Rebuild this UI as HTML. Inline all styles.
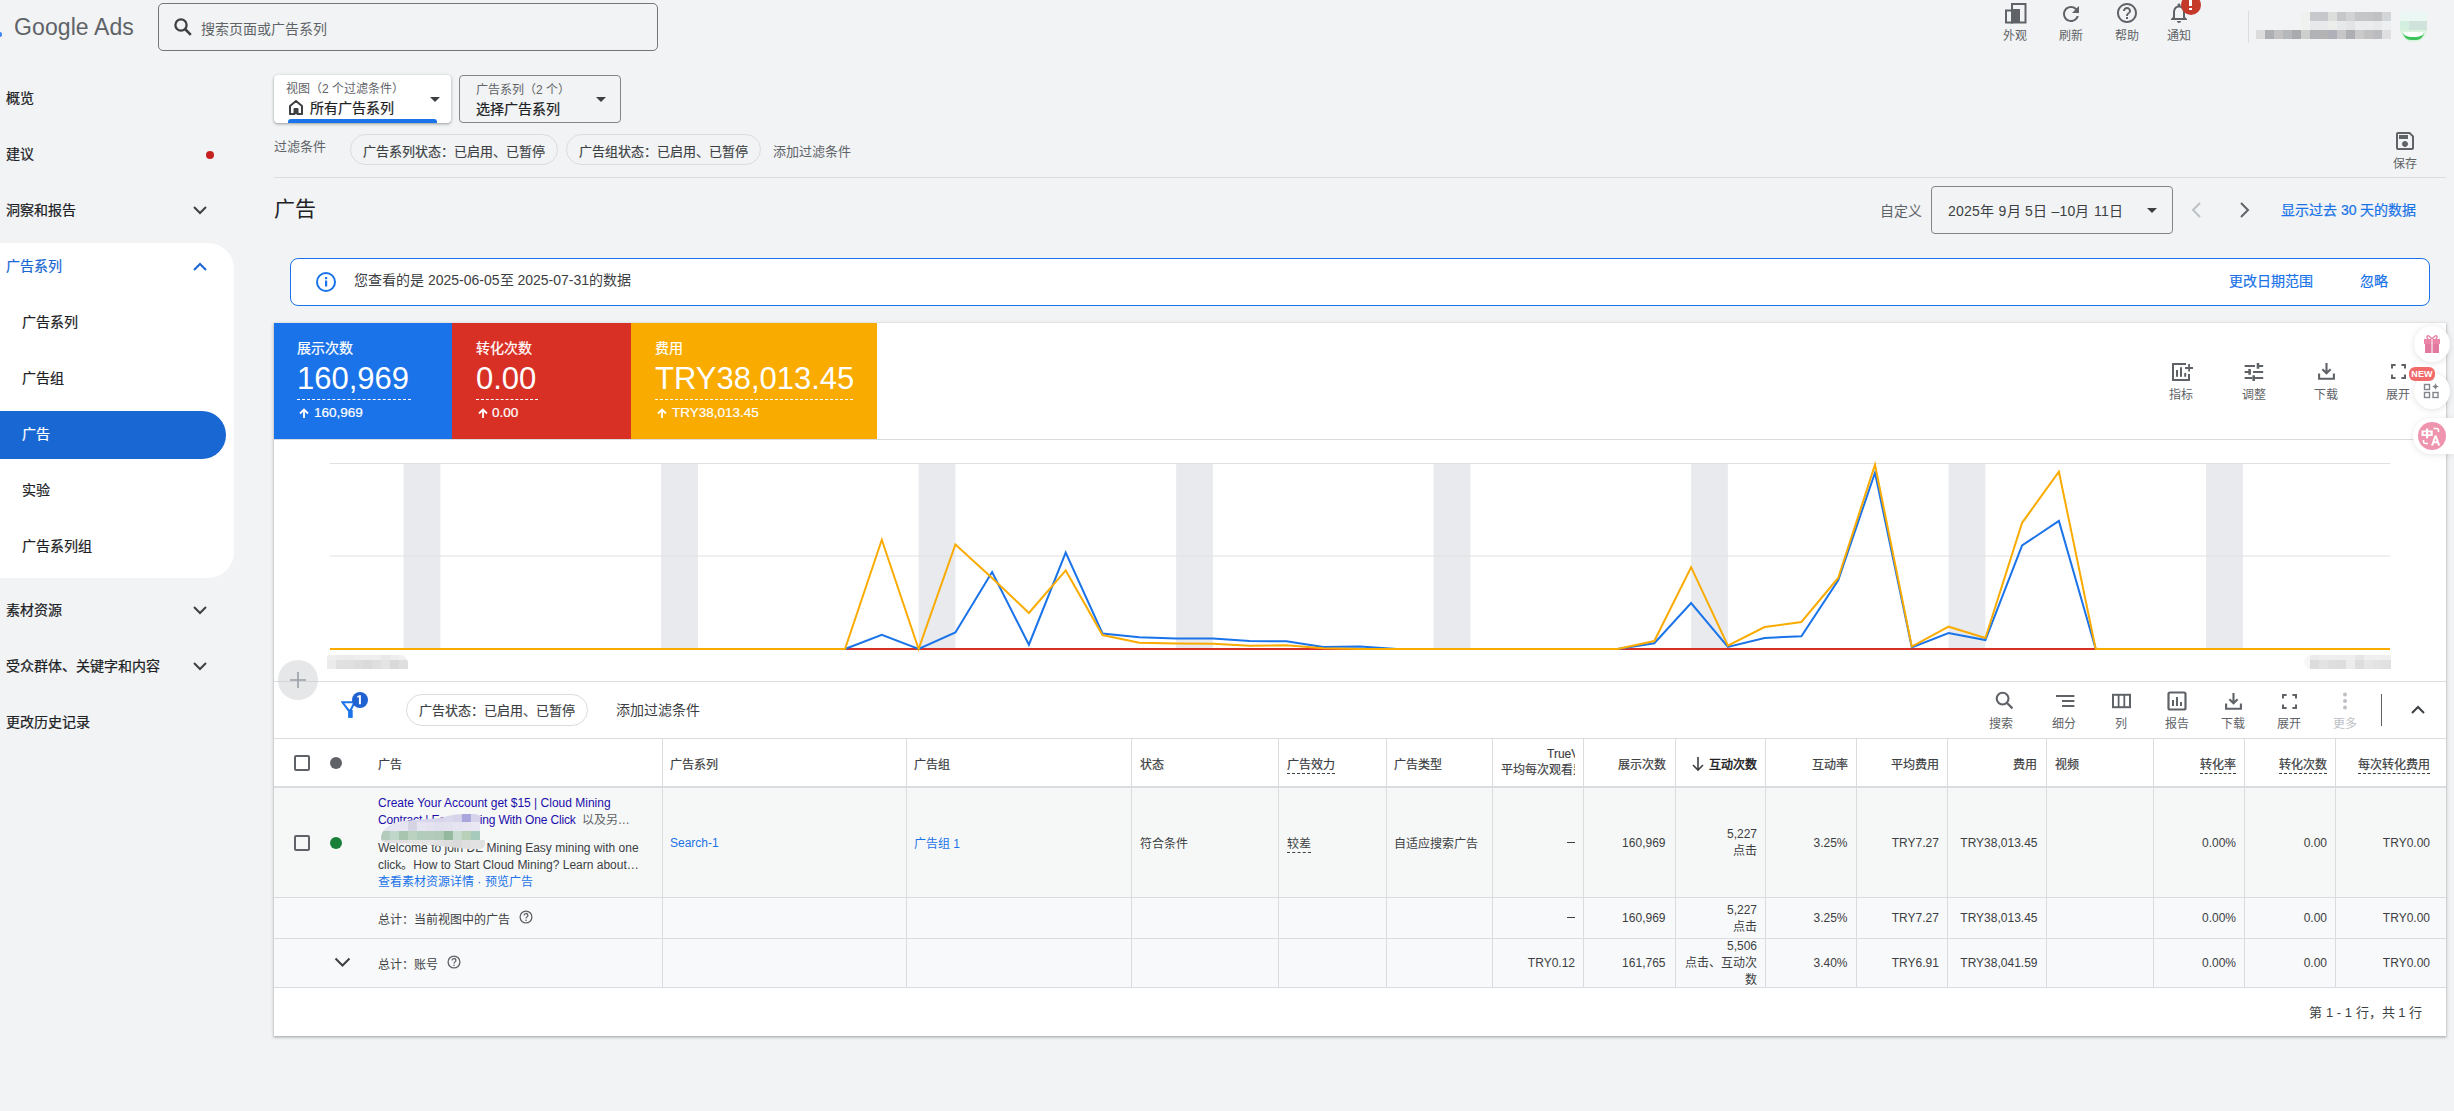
<!DOCTYPE html>
<html lang="zh-CN"><head><meta charset="utf-8">
<style>
*{box-sizing:border-box;margin:0;padding:0}
html,body{width:2454px;height:1111px;overflow:hidden;background:#f1f3f4;font-family:"Liberation Sans",sans-serif;color:#3c4043}
.a{position:absolute;white-space:nowrap;line-height:1.149}
.t12{font-size:12px}.t13{font-size:13px}.t14{font-size:14px}
.med{-webkit-text-stroke-width:0.22px}
.hm{-webkit-text-stroke-width:0.15px}
.c{line-height:16px}
svg{display:block}
</style></head><body>
<!-- HEADER -->
<div class="a" style="left:0;top:0;width:2454px;height:60px">
  <div class="a" style="left:0;top:32px;width:2px;height:5px;background:#4285f4;border-radius:0 2px 2px 0"></div>
  <div class="a" style="left:14px;top:14px;font-size:23px;color:#5f6368;letter-spacing:0.1px">Google Ads</div>
  <div class="a" style="left:158px;top:3px;width:500px;height:48px;border:1px solid #757575;border-radius:5px"></div>
  <svg class="a" style="left:174px;top:18px" width="18" height="18" viewBox="0 0 18 18"><circle cx="7" cy="7" r="5.6" stroke="#3c4043" stroke-width="2.3" fill="none"/><path d="M11 11l5.8 5.8" stroke="#3c4043" stroke-width="2.6"/></svg>
  <div class="a t14" style="left:201px;top:21px;color:#5f6368">搜索页面或广告系列</div>

  <!-- header icons -->
  <svg class="a" style="left:2005px;top:3px" width="22" height="21" viewBox="0 0 22 21"><rect x="7" y="1" width="13.5" height="18.5" stroke="#5f6368" stroke-width="2" fill="none"/><rect x="1" y="7.5" width="6" height="12" stroke="#5f6368" stroke-width="2" fill="none"/><rect x="7" y="6" width="8" height="14" fill="#5f6368"/></svg>
  <div class="a t12" style="left:2003px;top:30px;color:#5f6368">外观</div>
  <svg class="a" style="left:2059px;top:2px" width="24" height="24" viewBox="0 0 24 24"><path fill="#5f6368" d="M17.65 6.35A7.958 7.958 0 0 0 12 4c-4.42 0-7.99 3.58-7.99 8s3.57 8 7.99 8c3.73 0 6.84-2.55 7.73-6h-2.08A5.99 5.99 0 0 1 12 18c-3.31 0-6-2.69-6-6s2.69-6 6-6c1.66 0 3.14.69 4.22 1.78L13 11h7V4l-2.35 2.35z"/></svg>
  <div class="a t12" style="left:2059px;top:30px;color:#5f6368">刷新</div>
  <svg class="a" style="left:2115px;top:1px" width="24" height="24" viewBox="0 0 24 24"><path fill="#5f6368" d="M11 18h2v-2h-2v2zm1-16C6.48 2 2 6.48 2 12s4.48 10 10 10 10-4.48 10-10S17.52 2 12 2zm0 18c-4.41 0-8-3.59-8-8s3.59-8 8-8 8 3.59 8 8-3.59 8-8 8zm0-14c-2.21 0-4 1.79-4 4h2c0-1.1.9-2 2-2s2 .9 2 2c0 2-3 1.75-3 5h2c0-2.25 3-2.5 3-5 0-2.21-1.79-4-4-4z"/></svg>
  <div class="a t12" style="left:2115px;top:30px;color:#5f6368">帮助</div>
  <svg class="a" style="left:2167px;top:1px" width="24" height="24" viewBox="0 0 24 24"><path fill="#5f6368" d="M12 22c1.1 0 2-.9 2-2h-4c0 1.1.89 2 2 2zm6-6v-5c0-3.07-1.64-5.64-4.5-6.32V4c0-.83-.67-1.5-1.5-1.5s-1.5.67-1.5 1.5v.68C7.63 5.36 6 7.92 6 11v5l-2 2v1h16v-1l-2-2zm-2 1H8v-6c0-2.48 1.51-4.5 4-4.5s4 2.02 4 4.5v6z"/></svg>
  <div class="a" style="left:2181px;top:-5px;width:20px;height:20px;border-radius:50%;background:#c5392b"></div>
  <div class="a" style="left:2189px;top:0px;width:3px;height:6px;background:#fff"></div>
  <div class="a" style="left:2189px;top:8px;width:3px;height:2px;background:#fff"></div>
  <div class="a t12" style="left:2167px;top:30px;color:#5f6368">通知</div>
  <div class="a" style="left:2248px;top:11px;width:1px;height:32px;background:#dadce0"></div>
<div class="a" style="left:2301px;top:12px;width:9px;height:9px;background:#eff1ee"></div><div class="a" style="left:2310px;top:12px;width:9px;height:9px;background:#c8c9cc"></div><div class="a" style="left:2319px;top:12px;width:9px;height:9px;background:#c6c7cb"></div><div class="a" style="left:2328px;top:12px;width:9px;height:9px;background:#dcdedc"></div><div class="a" style="left:2337px;top:12px;width:9px;height:9px;background:#c6c7ca"></div><div class="a" style="left:2346px;top:12px;width:9px;height:9px;background:#d2d3d5"></div><div class="a" style="left:2355px;top:12px;width:9px;height:9px;background:#c5c6c7"></div><div class="a" style="left:2364px;top:12px;width:9px;height:9px;background:#c4c5c5"></div><div class="a" style="left:2373px;top:12px;width:9px;height:9px;background:#c1c1c3"></div><div class="a" style="left:2382px;top:12px;width:9px;height:9px;background:#d3d6d9"></div><div class="a" style="left:2301px;top:21px;width:9px;height:9px;background:#f0f2f0"></div><div class="a" style="left:2310px;top:21px;width:9px;height:9px;background:#e8e9ea"></div><div class="a" style="left:2319px;top:21px;width:9px;height:9px;background:#e8e9ea"></div><div class="a" style="left:2328px;top:21px;width:9px;height:9px;background:#eceeec"></div><div class="a" style="left:2337px;top:21px;width:9px;height:9px;background:#e6e9ea"></div><div class="a" style="left:2346px;top:21px;width:9px;height:9px;background:#e3e4e6"></div><div class="a" style="left:2355px;top:21px;width:9px;height:9px;background:#ebecee"></div><div class="a" style="left:2364px;top:21px;width:9px;height:9px;background:#ebecee"></div><div class="a" style="left:2373px;top:21px;width:9px;height:9px;background:#e8e9eb"></div><div class="a" style="left:2382px;top:21px;width:9px;height:9px;background:#eeeff0"></div><div class="a" style="left:2256px;top:30px;width:9px;height:9px;background:#dcdcdc"></div><div class="a" style="left:2265px;top:30px;width:9px;height:9px;background:#adafb3"></div><div class="a" style="left:2274px;top:30px;width:9px;height:9px;background:#c3c1c1"></div><div class="a" style="left:2283px;top:30px;width:9px;height:9px;background:#b4b8bb"></div><div class="a" style="left:2292px;top:30px;width:9px;height:9px;background:#a9aaae"></div><div class="a" style="left:2301px;top:30px;width:9px;height:9px;background:#cdcfcd"></div><div class="a" style="left:2310px;top:30px;width:9px;height:9px;background:#b1b2b5"></div><div class="a" style="left:2319px;top:30px;width:9px;height:9px;background:#b5b4b5"></div><div class="a" style="left:2328px;top:30px;width:9px;height:9px;background:#b0b1b8"></div><div class="a" style="left:2337px;top:30px;width:9px;height:9px;background:#c5c6c5"></div><div class="a" style="left:2346px;top:30px;width:9px;height:9px;background:#aeafb5"></div><div class="a" style="left:2355px;top:30px;width:9px;height:9px;background:#cbcacb"></div><div class="a" style="left:2364px;top:30px;width:9px;height:9px;background:#c0c1c0"></div><div class="a" style="left:2373px;top:30px;width:9px;height:9px;background:#bbbcc0"></div><div class="a" style="left:2382px;top:30px;width:9px;height:9px;background:#dfdfe2"></div><div class="a" style="left:2400px;top:12px;width:27px;height:30px;overflow:hidden;border-radius:0 0 14px 14px">
<div class="a" style="left:0;top:0;width:27px;height:9px;background:#eaf7f2"></div>
<div class="a" style="left:0;top:9px;width:9px;height:9px;background:#d2efe0"></div><div class="a" style="left:9px;top:9px;width:18px;height:9px;background:#d0e3da"></div>
<div class="a" style="left:0;top:18px;width:27px;height:12px;background:#d9f3df"></div>
<div class="a" style="left:3px;top:20px;width:21px;height:8px;border-bottom:3px solid #3cc45a;border-radius:0 0 12px 12px;background:#fff"></div>
</div>
</div>
<!-- SIDEBAR -->
<div class="a" style="left:0;top:243px;width:234px;height:335px;background:#fff;border-radius:0 26px 26px 0"></div>
<div class="a" style="left:0;top:411px;width:226px;height:48px;background:#1967d2;border-radius:0 24px 24px 0"></div>
<div class="a t14 med" style="left:6px;top:90px;color:#202124">概览</div>
<div class="a t14 med" style="left:6px;top:146px;color:#202124">建议</div>
<div class="a" style="left:206px;top:151px;width:8px;height:8px;border-radius:50%;background:#c5221f"></div>
<div class="a t14 med" style="left:6px;top:202px;color:#202124">洞察和报告</div>
<svg class="a" style="left:192px;top:204px" width="16" height="12" viewBox="0 0 16 12"><path d="M2 3l6 6 6-6" stroke="#3c4043" stroke-width="2" fill="none"/></svg>
<div class="a t14 med" style="left:6px;top:258px;color:#1967d2">广告系列</div>
<svg class="a" style="left:192px;top:261px" width="16" height="12" viewBox="0 0 16 12"><path d="M2 9l6-6 6 6" stroke="#1967d2" stroke-width="2" fill="none"/></svg>
<div class="a t14 med" style="left:22px;top:314px;color:#202124">广告系列</div>
<div class="a t14 med" style="left:22px;top:370px;color:#202124">广告组</div>
<div class="a t14 med" style="left:22px;top:426px;color:#fff">广告</div>
<div class="a t14 med" style="left:22px;top:482px;color:#202124">实验</div>
<div class="a t14 med" style="left:22px;top:538px;color:#202124">广告系列组</div>
<div class="a t14 med" style="left:6px;top:602px;color:#202124">素材资源</div>
<svg class="a" style="left:192px;top:604px" width="16" height="12" viewBox="0 0 16 12"><path d="M2 3l6 6 6-6" stroke="#3c4043" stroke-width="2" fill="none"/></svg>
<div class="a t14 med" style="left:6px;top:658px;color:#202124">受众群体、关键字和内容</div>
<svg class="a" style="left:192px;top:660px" width="16" height="12" viewBox="0 0 16 12"><path d="M2 3l6 6 6-6" stroke="#3c4043" stroke-width="2" fill="none"/></svg>
<div class="a t14 med" style="left:6px;top:714px;color:#202124">更改历史记录</div>

<!-- TOP CONTROLS -->
<div class="a" style="left:274px;top:75px;width:177px;height:48px;background:#fff;border-radius:4px;box-shadow:0 1px 2px rgba(60,64,67,.3),0 1px 3px 1px rgba(60,64,67,.15);overflow:hidden">
  <div class="a t12" style="left:12px;top:8px;color:#5f6368">视图（2 个过滤条件）</div>
  <svg class="a" style="left:14px;top:24px" width="16" height="16" viewBox="0 0 16 16"><path d="M2 15V7l6-5 6 5v8h-4.5v-5h-3v5z" fill="none" stroke="#3c4043" stroke-width="2" stroke-linejoin="round"/><rect x="6.5" y="10" width="3" height="5" fill="#3c4043"/></svg>
  <div class="a t14 med" style="left:36px;top:25px;color:#202124">所有广告系列</div>
  <svg class="a" style="left:155px;top:21px" width="12" height="7" viewBox="0 0 12 7"><path d="M1 1h10L6 6z" fill="#3c4043"/></svg>
  <div class="a" style="left:14px;top:44px;width:149px;height:6px;background:#1a73e8;border-radius:3px 3px 0 0"></div>
</div>
<div class="a" style="left:459px;top:75px;width:162px;height:48px;border:1px solid #80868b;border-radius:4px">
  <div class="a t12" style="left:16px;top:8px;color:#5f6368">广告系列（2 个）</div>
  <div class="a t14 med" style="left:16px;top:25px;color:#202124">选择广告系列</div>
  <svg class="a" style="left:135px;top:20px" width="12" height="7" viewBox="0 0 12 7"><path d="M1 1h10L6 6z" fill="#3c4043"/></svg>
</div>
<div class="a t13" style="left:274px;top:140px;color:#5f6368">过滤条件</div>
<div class="a" style="left:350px;top:134px;width:208px;height:31px;border:1px solid #dadce0;border-radius:16px"></div>
<div class="a t13 hm" style="left:363px;top:145px;color:#3c4043">广告系列状态：已启用、已暂停</div>
<div class="a" style="left:566px;top:134px;width:195px;height:31px;border:1px solid #dadce0;border-radius:16px"></div>
<div class="a t13 hm" style="left:579px;top:145px;color:#3c4043">广告组状态：已启用、已暂停</div>
<div class="a t13" style="left:773px;top:145px;color:#5f6368">添加过滤条件</div>
<svg class="a" style="left:2393px;top:129px" width="24" height="24" viewBox="0 0 24 24"><path fill="#5f6368" d="M17 3H5a2 2 0 0 0-2 2v14a2 2 0 0 0 2 2h14c1.1 0 2-.9 2-2V7l-4-4zm2 16H5V5h11.17L19 7.83V19zm-7-7c-1.66 0-3 1.34-3 3s1.34 3 3 3 3-1.34 3-3-1.34-3-3-3zM6 6h9v4H6z"/></svg>
<div class="a t12" style="left:2393px;top:158px;color:#5f6368">保存</div>
<div class="a" style="left:274px;top:177px;width:2172px;height:1px;background:#dadce0"></div>
<div class="a" style="left:274px;top:197px;font-size:21px;color:#202124">广告</div>
<div class="a t14" style="left:1880px;top:203px;color:#5f6368">自定义</div>
<div class="a" style="left:1931px;top:186px;width:242px;height:48px;border:1px solid #80868b;border-radius:4px"></div>
<div class="a t14" style="left:1948px;top:203px;color:#3c4043;letter-spacing:0.25px">2025年 9月 5日 –10月 11日</div>
<svg class="a" style="left:2146px;top:207px" width="12" height="7" viewBox="0 0 12 7"><path d="M1 1h10L6 6z" fill="#3c4043"/></svg>
<svg class="a" style="left:2188px;top:200px" width="16" height="20" viewBox="0 0 16 20"><path d="M12 3L5 10l7 7" stroke="#bdc1c6" stroke-width="2" fill="none"/></svg>
<svg class="a" style="left:2237px;top:200px" width="16" height="20" viewBox="0 0 16 20"><path d="M4 3l7 7-7 7" stroke="#5f6368" stroke-width="2" fill="none"/></svg>
<div class="a t14 med" style="left:2281px;top:202px;color:#1a73e8">显示过去 30 天的数据</div>

<!-- INFO BANNER -->
<div class="a" style="left:290px;top:258px;width:2140px;height:48px;background:#fff;border:1px solid #1a73e8;border-radius:8px"></div>
<svg class="a" style="left:315px;top:271px" width="22" height="22" viewBox="0 0 22 22"><circle cx="11" cy="11" r="9" stroke="#1a73e8" stroke-width="2" fill="none"/><rect x="10" y="9.5" width="2.2" height="6" fill="#1a73e8"/><rect x="10" y="6" width="2.2" height="2.2" fill="#1a73e8"/></svg>
<div class="a t14" style="left:354px;top:272px;color:#3c4043">您查看的是 2025-06-05至 2025-07-31的数据</div>
<div class="a t14 med" style="left:2229px;top:273px;color:#1a73e8">更改日期范围</div>
<div class="a t14 med" style="left:2360px;top:273px;color:#1a73e8">忽略</div>

<!-- MAIN CARD -->
<div class="a" style="left:274px;top:323px;width:2172px;height:713px;background:#fff;box-shadow:0 1px 2px rgba(60,64,67,.3),0 1px 3px 1px rgba(60,64,67,.15)"></div>
<div class="a" style="left:274px;top:323px;width:178px;height:116px;background:#1a73e8"></div>
<div class="a" style="left:452px;top:323px;width:179px;height:116px;background:#d93025"></div>
<div class="a" style="left:631px;top:323px;width:246px;height:116px;background:#f9ab00"></div>
<div class="a t14 med" style="left:297px;top:340px;color:#fff">展示次数</div>
<div class="a" style="left:297px;top:362px;font-size:31px;color:#fff;line-height:34px">160,969</div>
<div class="a" style="left:297px;top:399px;width:114px;border-top:1px dashed #fff"></div>
<svg class="a" style="left:298px;top:408px" width="12" height="11" viewBox="0 0 12 11"><path d="M6 10V2M2 5.5L6 1.5l4 4" stroke="#fff" stroke-width="1.8" fill="none"/></svg>
<div class="a med" style="font-size:13.5px;left:314px;top:405px;color:#fff">160,969</div>
<div class="a t14 med" style="left:476px;top:340px;color:#fff">转化次数</div>
<div class="a" style="left:476px;top:362px;font-size:31px;color:#fff;line-height:34px">0.00</div>
<div class="a" style="left:476px;top:399px;width:62px;border-top:1px dashed #fff"></div>
<svg class="a" style="left:477px;top:408px" width="12" height="11" viewBox="0 0 12 11"><path d="M6 10V2M2 5.5L6 1.5l4 4" stroke="#fff" stroke-width="1.8" fill="none"/></svg>
<div class="a med" style="font-size:13.5px;left:492px;top:405px;color:#fff">0.00</div>
<div class="a t14 med" style="left:655px;top:340px;color:#fff">费用</div>
<div class="a" style="left:655px;top:362px;font-size:31px;color:#fff;line-height:34px">TRY38,013.45</div>
<div class="a" style="left:655px;top:399px;width:198px;border-top:1px dashed #fff"></div>
<svg class="a" style="left:656px;top:408px" width="12" height="11" viewBox="0 0 12 11"><path d="M6 10V2M2 5.5L6 1.5l4 4" stroke="#fff" stroke-width="1.8" fill="none"/></svg>
<div class="a med" style="font-size:13.5px;left:672px;top:405px;color:#fff">TRY38,013.45</div>

<!-- chart tools -->
<svg class="a" style="left:2172px;top:363px" width="22" height="20" viewBox="0 0 22 20"><path d="M14 1H1V17H17V11" stroke="#5f6368" stroke-width="2" fill="none"/><path d="M17.1 1v7.6M13 5h8" stroke="#5f6368" stroke-width="1.8"/><rect x="4" y="7" width="2" height="6.8" fill="#5f6368"/><rect x="8" y="4.2" width="2" height="9.6" fill="#5f6368"/><rect x="12.2" y="10" width="2" height="3.8" fill="#5f6368"/></svg>
<div class="a t12 c" style="left:2169px;top:387px;color:#5f6368">指标</div>
<svg class="a" style="left:2244px;top:363px" width="20" height="19" viewBox="0 0 20 19"><path d="M0.6 3H11M13.3 3H19.2M0.6 9H6.5M9 9H19.2M0.6 15H8.4M10.9 15H19.2" stroke="#5f6368" stroke-width="2.2"/><path d="M14 0v5.7M5.6 6v5.8M9.7 12.3v5.7" stroke="#5f6368" stroke-width="2.6"/></svg>
<div class="a t12 c" style="left:2242px;top:387px;color:#5f6368">调整</div>
<svg class="a" style="left:2318px;top:363px" width="17" height="17" viewBox="0 0 17 17"><path d="M8.5 0v10.2M4.4 6.2l4.1 4.1 4.1-4.1" stroke="#5f6368" stroke-width="2.1" fill="none"/><path d="M1.1 10.5v5.3h14.8v-5.3" stroke="#5f6368" stroke-width="2.1" fill="none"/></svg>
<div class="a t12 c" style="left:2314px;top:387px;color:#5f6368">下载</div>
<svg class="a" style="left:2391px;top:364px" width="15" height="15" viewBox="0 0 15 15"><path d="M1 4.6V1h3.6M10.4 1H14v3.6M14 10.4V14h-3.6M4.6 14H1v-3.6" stroke="#5f6368" stroke-width="2" fill="none"/></svg>
<div class="a t12 c" style="left:2386px;top:387px;color:#5f6368">展开</div>
<div class="a" style="left:274px;top:439px;width:2172px;height:1px;background:#dadce0"></div>

<!-- CHART -->
<svg class="a" style="left:274px;top:440px" width="2172" height="241" viewBox="274 440 2172 241">
<rect x="403.6" y="463.5" width="36.8" height="185" fill="#e8eaed"/><rect x="661.1" y="463.5" width="36.8" height="185" fill="#e8eaed"/><rect x="918.6" y="463.5" width="36.8" height="185" fill="#e8eaed"/><rect x="1176.1" y="463.5" width="36.8" height="185" fill="#e8eaed"/><rect x="1433.6" y="463.5" width="36.8" height="185" fill="#e8eaed"/><rect x="1691.1" y="463.5" width="36.8" height="185" fill="#e8eaed"/><rect x="1948.6" y="463.5" width="36.8" height="185" fill="#e8eaed"/><rect x="2206.1" y="463.5" width="36.8" height="185" fill="#e8eaed"/>
<path d="M330 463.5H2390M330 556H2390" stroke="#e0e0e0" stroke-width="1"/>
<polyline points="845,649 2095.7,649" stroke="#d93025" stroke-width="2" fill="none"/>
<polyline points="845.0,649 881.8,634.9 918.6,649 955.4,632.4 992.1,572.0 1028.9,644.7 1065.7,552.6 1102.5,633.5 1139.3,637.2 1176.1,638.4 1212.9,638.4 1249.6,641.0 1286.4,641.3 1323.2,647.0 1360.0,646.5 1396.8,649 1433.6,649 1470.4,649 1507.1,649 1543.9,649 1580.7,649 1617.5,649 1654.3,643.2 1691.1,603.1 1727.9,647.0 1764.6,638.0 1801.4,636.2 1838.2,580.4 1875.0,472.7 1911.8,647.5 1948.6,633.0 1985.4,640.0 2022.1,545.5 2058.9,520.9 2095.7,649" stroke="#1a73e8" stroke-width="2" fill="none" stroke-linejoin="miter"/>
<polyline points="330.0,649 845.0,649 881.8,539.8 918.6,649 955.4,544.5 992.1,578.0 1028.9,613.0 1065.7,570.4 1102.5,635.0 1139.3,642.8 1176.1,643.5 1212.9,643.8 1249.6,645.7 1286.4,645.2 1323.2,648.2 1360.0,649 1396.8,649 1433.6,649 1470.4,649 1507.1,649 1543.9,649 1580.7,649 1617.5,649 1654.3,641.0 1691.1,567.2 1727.9,645.7 1764.6,627.0 1801.4,622.0 1838.2,578.0 1875.0,464.7 1911.8,646.6 1948.6,626.7 1985.4,638.0 2022.1,522.8 2058.9,471.7 2095.7,649 2390.0,649" stroke="#f9ab00" stroke-width="2" fill="none" stroke-linejoin="miter"/>
</svg>

<!-- TABLE -->
<div class="a" style="left:274px;top:681px;width:2172px;height:1px;background:#dadce0"></div>
<div class="a" style="left:278px;top:660px;width:40px;height:40px;border-radius:50%;background:#e6e7e8"></div><div class="a" style="left:278px;top:681px;width:40px;height:1px;background:#d2d4d7"></div>
<svg class="a" style="left:290px;top:672px" width="16" height="16" viewBox="0 0 16 16"><path d="M8 0v16M0 8h16" stroke="#9aa0a6" stroke-width="1.6"/></svg>
<div class="a" style="left:327px;top:655px;width:81px;height:14px;overflow:hidden;border-radius:2px 8px 0 0"><div class="a" style="left:0px;top:0;width:9px;height:5px;background:#eeeeee"></div><div class="a" style="left:0px;top:5px;width:9px;height:9px;background:#ebebeb"></div><div class="a" style="left:9px;top:0;width:9px;height:5px;background:#ececec"></div><div class="a" style="left:9px;top:5px;width:9px;height:9px;background:#e0e0e0"></div><div class="a" style="left:18px;top:0;width:9px;height:5px;background:#ebebeb"></div><div class="a" style="left:18px;top:5px;width:9px;height:9px;background:#e0e0e0"></div><div class="a" style="left:27px;top:0;width:9px;height:5px;background:#eeeeee"></div><div class="a" style="left:27px;top:5px;width:9px;height:9px;background:#dddddd"></div><div class="a" style="left:36px;top:0;width:9px;height:5px;background:#efefef"></div><div class="a" style="left:36px;top:5px;width:9px;height:9px;background:#dadada"></div><div class="a" style="left:45px;top:0;width:9px;height:5px;background:#efefef"></div><div class="a" style="left:45px;top:5px;width:9px;height:9px;background:#dfdfdf"></div><div class="a" style="left:54px;top:0;width:9px;height:5px;background:#e9e9e9"></div><div class="a" style="left:54px;top:5px;width:9px;height:9px;background:#e4e4e4"></div><div class="a" style="left:63px;top:0;width:9px;height:5px;background:#eeeeee"></div><div class="a" style="left:63px;top:5px;width:9px;height:9px;background:#d9d9d9"></div><div class="a" style="left:72px;top:0;width:9px;height:5px;background:#f0f0f0"></div><div class="a" style="left:72px;top:5px;width:9px;height:9px;background:#dfdfdf"></div></div><div class="a" style="left:2304px;top:655px;width:7px;height:14px;background:#f7f7f7;border-radius:7px 0 0 7px"></div><div class="a" style="left:2310px;top:655px;width:81px;height:14px;overflow:hidden;border-radius:2px 2px 0 0"><div class="a" style="left:0px;top:0;width:9px;height:5px;background:#ebebeb"></div><div class="a" style="left:0px;top:5px;width:9px;height:9px;background:#dcdcdc"></div><div class="a" style="left:9px;top:0;width:9px;height:5px;background:#eeeeee"></div><div class="a" style="left:9px;top:5px;width:9px;height:9px;background:#e3e3e3"></div><div class="a" style="left:18px;top:0;width:9px;height:5px;background:#eeeeee"></div><div class="a" style="left:18px;top:5px;width:9px;height:9px;background:#dedede"></div><div class="a" style="left:27px;top:0;width:9px;height:5px;background:#eeeeee"></div><div class="a" style="left:27px;top:5px;width:9px;height:9px;background:#dddddd"></div><div class="a" style="left:36px;top:0;width:9px;height:5px;background:#efefef"></div><div class="a" style="left:36px;top:5px;width:9px;height:9px;background:#ececec"></div><div class="a" style="left:45px;top:0;width:9px;height:5px;background:#e6e6e6"></div><div class="a" style="left:45px;top:5px;width:9px;height:9px;background:#dddddd"></div><div class="a" style="left:54px;top:0;width:9px;height:5px;background:#efefef"></div><div class="a" style="left:54px;top:5px;width:9px;height:9px;background:#e6e6e6"></div><div class="a" style="left:63px;top:0;width:9px;height:5px;background:#efefef"></div><div class="a" style="left:63px;top:5px;width:9px;height:9px;background:#e3e3e3"></div><div class="a" style="left:72px;top:0;width:9px;height:5px;background:#efefef"></div><div class="a" style="left:72px;top:5px;width:9px;height:9px;background:#e1e1e1"></div></div>
<svg class="a" style="left:341px;top:701px" width="16" height="18" viewBox="0 0 16 18"><path d="M1.4 1.3H13.6L9.6 9.2H7.4Z" fill="none" stroke="#1a73e8" stroke-width="2"/><rect x="7.1" y="9" width="4.6" height="7.9" fill="#1a73e8"/></svg>
<svg class="a" style="left:352px;top:692px" width="16" height="16" viewBox="0 0 16 16"><circle cx="8" cy="8" r="8" fill="#2162d3"/><path d="M7.2 3.3L5.2 4.3V5.8L6.9 5V12.2H8.9V3.3Z" fill="#fff"/></svg>
<div class="a" style="left:406px;top:694px;width:182px;height:32px;border:1px solid #dadce0;border-radius:16px"></div>
<div class="a t13 c hm" style="left:419px;top:703px;color:#3c4043">广告状态：已启用、已暂停</div>
<div class="a t14 c" style="left:616px;top:702px;color:#3c4043">添加过滤条件</div>
<div class="a" style="left:1995px;top:691px"><svg width="20" height="20" viewBox="0 0 20 20"><circle cx="7.6" cy="7.6" r="5.9" stroke="#5f6368" stroke-width="2.1" fill="none"/><path d="M11.8 11.8l5.6 5.6" stroke="#5f6368" stroke-width="2.3"/></svg></div><div class="a t12 c" style="left:1981px;top:716px;width:40px;text-align:center;color:#5f6368">搜索</div>
<div class="a" style="left:2055px;top:692px"><svg width="20" height="20" viewBox="0 0 20 20"><path d="M1 4H19.4M7 9H19.4M7 14H19.4" stroke="#5f6368" stroke-width="2"/></svg></div><div class="a t12 c" style="left:2044px;top:716px;width:40px;text-align:center;color:#5f6368">细分</div>
<div class="a" style="left:2111px;top:692px"><svg width="20" height="18" viewBox="0 0 20 18"><rect x="2" y="2.8" width="17" height="12.4" stroke="#5f6368" stroke-width="2" fill="none"/><path d="M7.6 2.8v12.4M13.3 2.8v12.4" stroke="#5f6368" stroke-width="1.8"/></svg></div><div class="a t12 c" style="left:2101px;top:716px;width:40px;text-align:center;color:#5f6368">列</div>
<div class="a" style="left:2167px;top:691px"><svg width="20" height="20" viewBox="0 0 20 20"><rect x="1.5" y="1.5" width="17" height="17" rx="1.5" stroke="#5f6368" stroke-width="2.2" fill="none"/><path d="M6 9v6M10 6v9M14 11v4" stroke="#5f6368" stroke-width="2"/></svg></div><div class="a t12 c" style="left:2157px;top:716px;width:40px;text-align:center;color:#5f6368">报告</div>
<div class="a" style="left:2225px;top:693px"><svg width="17" height="17" viewBox="0 0 17 17"><path d="M8.5 0v10.2M4.4 6.2l4.1 4.1 4.1-4.1" stroke="#5f6368" stroke-width="2.1" fill="none"/><path d="M1.1 10.5v5.3h14.8v-5.3" stroke="#5f6368" stroke-width="2.1" fill="none"/></svg></div><div class="a t12 c" style="left:2213px;top:716px;width:40px;text-align:center;color:#5f6368">下载</div>
<div class="a" style="left:2282px;top:694px"><svg width="15" height="15" viewBox="0 0 15 15"><path d="M1 4.6V1h3.6M10.4 1H14v3.6M14 10.4V14h-3.6M4.6 14H1v-3.6" stroke="#5f6368" stroke-width="2" fill="none"/></svg></div><div class="a t12 c" style="left:2269px;top:716px;width:40px;text-align:center;color:#5f6368">展开</div>
<div class="a" style="left:2342px;top:692px"><svg width="6" height="18" viewBox="0 0 6 18"><circle cx="3" cy="2.5" r="2" fill="#bdc1c6"/><circle cx="3" cy="9" r="2" fill="#bdc1c6"/><circle cx="3" cy="15.5" r="2" fill="#bdc1c6"/></svg></div><div class="a t12 c" style="left:2325px;top:716px;width:40px;text-align:center;color:#bdc1c6">更多</div>
<div class="a" style="left:2381px;top:694px;width:1px;height:32px;background:#5f6368"></div>
<svg class="a" style="left:2410px;top:704px" width="16" height="12" viewBox="0 0 16 12"><path d="M2 9l6-6 6 6" stroke="#3c4043" stroke-width="2" fill="none"/></svg>
<div class="a" style="left:274px;top:738px;width:2172px;height:1px;background:#dadce0"></div>
<div class="a" style="left:274px;top:787px;width:2172px;height:110px;background:#f6f8f7"></div><div class="a" style="left:274px;top:897px;width:2172px;height:90px;background:#f8f9fa"></div>
<div class="a" style="left:274px;top:786px;width:2172px;height:2px;background:#dadce0"></div>
<div class="a" style="left:274px;top:897px;width:2172px;height:1px;background:#dadce0"></div>
<div class="a" style="left:274px;top:938px;width:2172px;height:1px;background:#dadce0"></div>
<div class="a" style="left:274px;top:987px;width:2172px;height:1px;background:#dadce0"></div>
<div class="a" style="left:662px;top:739px;width:1px;height:248px;background:#dadce0"></div><div class="a" style="left:906px;top:739px;width:1px;height:248px;background:#dadce0"></div><div class="a" style="left:1131px;top:739px;width:1px;height:248px;background:#dadce0"></div><div class="a" style="left:1278px;top:739px;width:1px;height:248px;background:#dadce0"></div><div class="a" style="left:1386px;top:739px;width:1px;height:248px;background:#dadce0"></div><div class="a" style="left:1492px;top:739px;width:1px;height:248px;background:#dadce0"></div><div class="a" style="left:1583px;top:739px;width:1px;height:248px;background:#dadce0"></div><div class="a" style="left:1675px;top:739px;width:1px;height:248px;background:#dadce0"></div><div class="a" style="left:1765px;top:739px;width:1px;height:248px;background:#dadce0"></div><div class="a" style="left:1856px;top:739px;width:1px;height:248px;background:#dadce0"></div><div class="a" style="left:1947px;top:739px;width:1px;height:248px;background:#dadce0"></div><div class="a" style="left:2046px;top:739px;width:1px;height:248px;background:#dadce0"></div><div class="a" style="left:2153px;top:739px;width:1px;height:248px;background:#dadce0"></div><div class="a" style="left:2244px;top:739px;width:1px;height:248px;background:#dadce0"></div><div class="a" style="left:2335px;top:739px;width:1px;height:248px;background:#dadce0"></div>
<div class="a" style="left:294px;top:755px;width:16px;height:16px;border:2px solid #5f6368;border-radius:2px"></div>
<div class="a" style="left:330px;top:757px;width:12px;height:12px;border-radius:50%;background:#5f6368"></div>
<div class="a t12 med c" style="left:378px;top:757px;color:#3c4043;">广告</div>
<div class="a t12 med c" style="left:670px;top:757px;color:#3c4043;">广告系列</div>
<div class="a t12 med c" style="left:914px;top:757px;color:#3c4043;">广告组</div>
<div class="a t12 med c" style="left:1140px;top:757px;color:#3c4043;">状态</div>
<div class="a t12 med c" style="left:1287px;top:757px;color:#3c4043;"><span style="border-bottom:1px dashed #3c4043;padding-bottom:1px">广告效力</span></div>
<div class="a t12 med c" style="left:1394px;top:757px;color:#3c4043;">广告类型</div>
<div class="a" style="left:1493px;top:740px;width:82px;height:44px;overflow:hidden"><div class="a t12 hm c" style="left:54px;top:6px;color:#3c4043">TrueView</div><div class="a t12 hm c" style="left:8px;top:22px;color:#3c4043">平均每次观看费用</div></div>
<div class="a t12 med c" style="right:788.5px;top:757px;color:#3c4043;text-align:right;">展示次数</div>
<svg class="a" style="left:1691px;top:756px" width="14" height="16" viewBox="0 0 14 16"><path d="M7 1v13M2 9l5 5 5-5" stroke="#3c4043" stroke-width="1.6" fill="none"/></svg>
<div class="a t12 c" style="right:697px;top:757px;color:#202124;text-align:right;-webkit-text-stroke-width:0.45px">互动次数</div>
<div class="a t12 med c" style="right:606.5px;top:757px;color:#3c4043;text-align:right;">互动率</div>
<div class="a t12 med c" style="right:515.5px;top:757px;color:#3c4043;text-align:right;">平均费用</div>
<div class="a t12 med c" style="right:417px;top:757px;color:#3c4043;text-align:right;">费用</div>
<div class="a t12 med c" style="left:2055px;top:757px;color:#3c4043;">视频</div>
<div class="a t12 med c" style="right:218px;top:757px;color:#3c4043;text-align:right;"><span style="border-bottom:1px dashed #3c4043;padding-bottom:1px">转化率</span></div>
<div class="a t12 med c" style="right:127px;top:757px;color:#3c4043;text-align:right;"><span style="border-bottom:1px dashed #3c4043;padding-bottom:1px">转化次数</span></div>
<div class="a t12 med c" style="right:24px;top:757px;color:#3c4043;text-align:right;"><span style="border-bottom:1px dashed #3c4043;padding-bottom:1px">每次转化费用</span></div>
<div class="a" style="left:294px;top:835px;width:16px;height:16px;border:2px solid #5f6368;border-radius:2px"></div>
<div class="a" style="left:330px;top:837px;width:12px;height:12px;border-radius:50%;background:#188038"></div>
<div class="a t12" style="left:378px;top:795px;line-height:17px;color:#1a0dab">Create Your Account get $15 | Cloud Mining</div>
<div class="a t12" style="left:378px;top:812px;line-height:17px;color:#1a0dab;letter-spacing:-0.15px">Contract | Easy Mining With One Click <span style="color:#5f6368;margin-left:3px;letter-spacing:0">以及另…</span></div>
<div class="a t12" style="left:378px;top:840px;line-height:17px;color:#3c4043">Welcome to join DE Mining Easy mining with one</div>
<div class="a t12" style="left:378px;top:857px;line-height:17px;color:#3c4043">click。How to Start Cloud Mining? Learn about…</div>
<div class="a t12" style="left:378px;top:874px;line-height:17px;color:#1a73e8">查看素材资源详情 · 预览广告</div>
<svg class="a" style="left:370px;top:805px" width="130" height="55" viewBox="370 805 130 55"><defs><clipPath id="bc"><path d="M381 838 C381 830 388 824 402 821 L440 818 C455 813 466 814 474 814 C481 814 485 820 485 828 L485 844 C485 849 478 850 468 849 L430 845 C412 843 398 844 388 843 C383 842 381 841 381 838Z"/></clipPath></defs><g clip-path="url(#bc)"><rect x="380.9" y="813" width="9.1" height="9.1" fill="#eceaf3"/><rect x="389.9" y="813" width="9.1" height="9.1" fill="#e9e7f3"/><rect x="398.9" y="813" width="9.1" height="9.1" fill="#dcd9ec"/><rect x="407.9" y="813" width="9.1" height="9.1" fill="#d9d6ec"/><rect x="416.9" y="813" width="9.1" height="9.1" fill="#d8d5ec"/><rect x="425.9" y="813" width="9.1" height="9.1" fill="#d7d4eb"/><rect x="434.9" y="813" width="9.1" height="9.1" fill="#d6d3ea"/><rect x="443.9" y="813" width="9.1" height="9.1" fill="#dad8ec"/><rect x="452.9" y="813" width="9.1" height="9.1" fill="#d6d3ea"/><rect x="461.9" y="813" width="9.1" height="9.1" fill="#a9a6dc"/><rect x="470.9" y="813" width="9.1" height="9.1" fill="#d6d3ea"/><rect x="380.9" y="822" width="9.1" height="9.1" fill="#e6e4f1"/><rect x="389.9" y="822" width="9.1" height="9.1" fill="#e7e5f2"/><rect x="398.9" y="822" width="9.1" height="9.1" fill="#e7e5f2"/><rect x="407.9" y="822" width="9.1" height="9.1" fill="#d5d4e4"/><rect x="416.9" y="822" width="9.1" height="9.1" fill="#e6e4f1"/><rect x="425.9" y="822" width="9.1" height="9.1" fill="#e4e2f0"/><rect x="434.9" y="822" width="9.1" height="9.1" fill="#e1e0ef"/><rect x="443.9" y="822" width="9.1" height="9.1" fill="#e3e1f0"/><rect x="452.9" y="822" width="9.1" height="9.1" fill="#e6e4f1"/><rect x="461.9" y="822" width="9.1" height="9.1" fill="#e7e5f2"/><rect x="470.9" y="822" width="9.1" height="9.1" fill="#e9e7f3"/><rect x="380.9" y="831" width="9.1" height="9.1" fill="#b2cbbb"/><rect x="389.9" y="831" width="9.1" height="9.1" fill="#c0d6cb"/><rect x="398.9" y="831" width="9.1" height="9.1" fill="#a8c5b0"/><rect x="407.9" y="831" width="9.1" height="9.1" fill="#bad2bf"/><rect x="416.9" y="831" width="9.1" height="9.1" fill="#b1ccbb"/><rect x="425.9" y="831" width="9.1" height="9.1" fill="#b3cbbb"/><rect x="434.9" y="831" width="9.1" height="9.1" fill="#b0c9b8"/><rect x="443.9" y="831" width="9.1" height="9.1" fill="#93b89e"/><rect x="452.9" y="831" width="9.1" height="9.1" fill="#c8dbd0"/><rect x="461.9" y="831" width="9.1" height="9.1" fill="#b8cfb8"/><rect x="470.9" y="831" width="9.1" height="9.1" fill="#a6cabc"/><rect x="380.9" y="840" width="9.1" height="9.1" fill="#dcdcdc"/><rect x="389.9" y="840" width="9.1" height="9.1" fill="#e0e0e0"/><rect x="398.9" y="840" width="9.1" height="9.1" fill="#dfdfdf"/><rect x="407.9" y="840" width="9.1" height="9.1" fill="#e3e3e3"/><rect x="416.9" y="840" width="9.1" height="9.1" fill="#e4e4e4"/><rect x="425.9" y="840" width="9.1" height="9.1" fill="#e5e5e5"/><rect x="434.9" y="840" width="9.1" height="9.1" fill="#e1e1e1"/><rect x="443.9" y="840" width="9.1" height="9.1" fill="#dddddd"/><rect x="452.9" y="840" width="9.1" height="9.1" fill="#dadada"/><rect x="461.9" y="840" width="9.1" height="9.1" fill="#dfdfdf"/><rect x="470.9" y="840" width="9.1" height="9.1" fill="#e2e2e2"/><rect x="479.9" y="840" width="9.1" height="9.1" fill="#e0e0e0"/></g></svg>
<div class="a t12 c" style="left:670px;top:835px;color:#1a73e8;">Search-1</div>
<div class="a t12 c" style="left:914px;top:836px;color:#1a73e8;">广告组 1</div>
<div class="a t12 c" style="left:1140px;top:836px;color:#3c4043;">符合条件</div>
<div class="a t12 c" style="left:1287px;top:836px;color:#3c4043;"><span style="border-bottom:1px dashed #3c4043;padding-bottom:1px">较差</span></div>
<div class="a t12 c" style="left:1394px;top:836px;color:#3c4043;">自适应搜索广告</div>
<div class="a t12 c" style="right:879px;top:835px;color:#3c4043;text-align:right;"><span style="display:inline-block;width:8px;height:1.3px;background:#3c4043;vertical-align:middle;margin-bottom:2px"></span></div>
<div class="a t12 c" style="right:788.5px;top:835px;color:#3c4043;text-align:right;">160,969</div>
<div class="a t12 c" style="right:697px;top:826px;color:#3c4043;text-align:right;">5,227</div>
<div class="a t12 c" style="right:697px;top:843px;color:#3c4043;text-align:right;">点击</div>
<div class="a t12 c" style="right:606.5px;top:835px;color:#3c4043;text-align:right;">3.25%</div>
<div class="a t12 c" style="right:515.2px;top:835px;color:#3c4043;text-align:right;">TRY7.27</div>
<div class="a t12 c" style="right:416.5px;top:835px;color:#3c4043;text-align:right;">TRY38,013.45</div>
<div class="a t12 c" style="right:218px;top:835px;color:#3c4043;text-align:right;">0.00%</div>
<div class="a t12 c" style="right:127px;top:835px;color:#3c4043;text-align:right;">0.00</div>
<div class="a t12 c" style="right:24px;top:835px;color:#3c4043;text-align:right;">TRY0.00</div>
<div class="a t12 c" style="left:378px;top:912px;color:#3c4043;">总计：当前视图中的广告</div>
<svg class="a" style="left:519px;top:910px" width="14" height="14" viewBox="0 0 14 14"><circle cx="7" cy="7" r="5.9" stroke="#5f6368" stroke-width="1.3" fill="none"/><path d="M5.1 5.4a1.9 1.9 0 1 1 2.6 1.8c-.5.3-.7.6-.7 1.3" stroke="#5f6368" stroke-width="1.3" fill="none"/><circle cx="7" cy="10.3" r=".8" fill="#5f6368"/></svg>
<div class="a t12 c" style="right:879px;top:910px;color:#3c4043;text-align:right;"><span style="display:inline-block;width:8px;height:1.3px;background:#3c4043;vertical-align:middle;margin-bottom:2px"></span></div>
<div class="a t12 c" style="right:788.5px;top:910px;color:#3c4043;text-align:right;">160,969</div>
<div class="a t12 c" style="right:697px;top:902px;color:#3c4043;text-align:right;">5,227</div>
<div class="a t12 c" style="right:697px;top:919px;color:#3c4043;text-align:right;">点击</div>
<div class="a t12 c" style="right:606.5px;top:910px;color:#3c4043;text-align:right;">3.25%</div>
<div class="a t12 c" style="right:515.2px;top:910px;color:#3c4043;text-align:right;">TRY7.27</div>
<div class="a t12 c" style="right:416.5px;top:910px;color:#3c4043;text-align:right;">TRY38,013.45</div>
<div class="a t12 c" style="right:218px;top:910px;color:#3c4043;text-align:right;">0.00%</div>
<div class="a t12 c" style="right:127px;top:910px;color:#3c4043;text-align:right;">0.00</div>
<div class="a t12 c" style="right:24px;top:910px;color:#3c4043;text-align:right;">TRY0.00</div>
<svg class="a" style="left:334px;top:956px" width="17" height="12" viewBox="0 0 17 12"><path d="M1.5 2.5l7 7 7-7" stroke="#3c4043" stroke-width="2" fill="none"/></svg>
<div class="a t12 c" style="left:378px;top:957px;color:#3c4043;">总计：账号</div>
<svg class="a" style="left:447px;top:955px" width="14" height="14" viewBox="0 0 14 14"><circle cx="7" cy="7" r="5.9" stroke="#5f6368" stroke-width="1.3" fill="none"/><path d="M5.1 5.4a1.9 1.9 0 1 1 2.6 1.8c-.5.3-.7.6-.7 1.3" stroke="#5f6368" stroke-width="1.3" fill="none"/><circle cx="7" cy="10.3" r=".8" fill="#5f6368"/></svg>
<div class="a t12 c" style="right:879px;top:955px;color:#3c4043;text-align:right;">TRY0.12</div>
<div class="a t12 c" style="right:788.5px;top:955px;color:#3c4043;text-align:right;">161,765</div>
<div class="a t12 c" style="right:697px;top:938px;color:#3c4043;text-align:right;">5,506</div>
<div class="a t12 c" style="right:697px;top:955px;color:#3c4043;text-align:right;">点击、互动次</div>
<div class="a t12 c" style="right:697px;top:972px;color:#3c4043;text-align:right;">数</div>
<div class="a t12 c" style="right:606.5px;top:955px;color:#3c4043;text-align:right;">3.40%</div>
<div class="a t12 c" style="right:515.2px;top:955px;color:#3c4043;text-align:right;">TRY6.91</div>
<div class="a t12 c" style="right:416.5px;top:955px;color:#3c4043;text-align:right;">TRY38,041.59</div>
<div class="a t12 c" style="right:218px;top:955px;color:#3c4043;text-align:right;">0.00%</div>
<div class="a t12 c" style="right:127px;top:955px;color:#3c4043;text-align:right;">0.00</div>
<div class="a t12 c" style="right:24px;top:955px;color:#3c4043;text-align:right;">TRY0.00</div>
<div class="a t13 c" style="right:32px;top:1005px;color:#3c4043;text-align:right;">第 1 - 1 行，共 1 行</div>

<!-- FLOATING -->
<div class="a" style="left:2414px;top:326px;width:36px;height:36px;border-radius:50%;background:#fff;box-shadow:0 1px 6px rgba(0,0,0,.12)"></div>
<svg class="a" style="left:2423px;top:334px" width="18" height="20" viewBox="0 0 18 20"><path d="M5 5C3 3 4 1 6 2L9 5 12 2C14 1 15 3 13 5" stroke="#e8799f" stroke-width="1.3" fill="none"/><rect x="1" y="5" width="16" height="5" fill="#ea85a8"/><rect x="2" y="10" width="14" height="9" fill="#e27aa0"/><path d="M9 5v14" stroke="#fff" stroke-width="1"/></svg>
<div class="a" style="left:2414px;top:373px;width:36px;height:36px;border-radius:50%;background:#fff;box-shadow:0 1px 6px rgba(0,0,0,.12)"></div>
<svg class="a" style="left:2423px;top:382px" width="18" height="18" viewBox="0 0 18 18"><rect x="1.5" y="2.5" width="5" height="5" stroke="#80868b" stroke-width="1.4" fill="none"/><rect x="1.5" y="10.5" width="5" height="5" stroke="#80868b" stroke-width="1.4" fill="none"/><rect x="10" y="10.5" width="5" height="5" stroke="#80868b" stroke-width="1.4" fill="none"/><path d="M12.5 1Q13 4 16 4.5Q13 5 12.5 8Q12 5 9 4.5Q12 4 12.5 1Z" fill="#80868b"/></svg>
<div class="a" style="left:2409px;top:367px;width:26px;height:14px;border-radius:6px;background:#f26b6b;color:#fff;font-size:9px;font-weight:700;text-align:center;line-height:14px;letter-spacing:.2px">NEW</div>
<div class="a" style="left:2413px;top:418px;width:41px;height:36px;border-radius:18px 0 0 18px;background:#fff;box-shadow:0 1px 6px rgba(0,0,0,.10)"></div>
<div class="a" style="left:2418px;top:422px;width:28px;height:28px;border-radius:50%;background:#ef94ae"></div>
<svg class="a" style="left:2418px;top:422px" width="28" height="28" viewBox="0 0 28 28"><path d="M8 6.5h2.2v2h4.5v5.5h-4.5v2.2h-2.2v-2.2H3.5V8.5H8zM5.6 10.3v2h2.4v-2zm4.6 0v2h2.4v-2z" fill="#fff"/><path d="M15.5 6.5h3a2 2 0 0 1 2 2v1.5" stroke="#fff" stroke-width="1.6" fill="none"/><path d="M5.5 18v1.5a2 2 0 0 0 2 2h2.5" stroke="#fff" stroke-width="1.6" fill="none"/><path d="M13 23.5l3.6-10h2l3.6 10h-2.2l-.8-2.3h-3.2l-.8 2.3zm3.5-4.2h2l-1-3z" fill="#fff"/></svg>

</body></html>
